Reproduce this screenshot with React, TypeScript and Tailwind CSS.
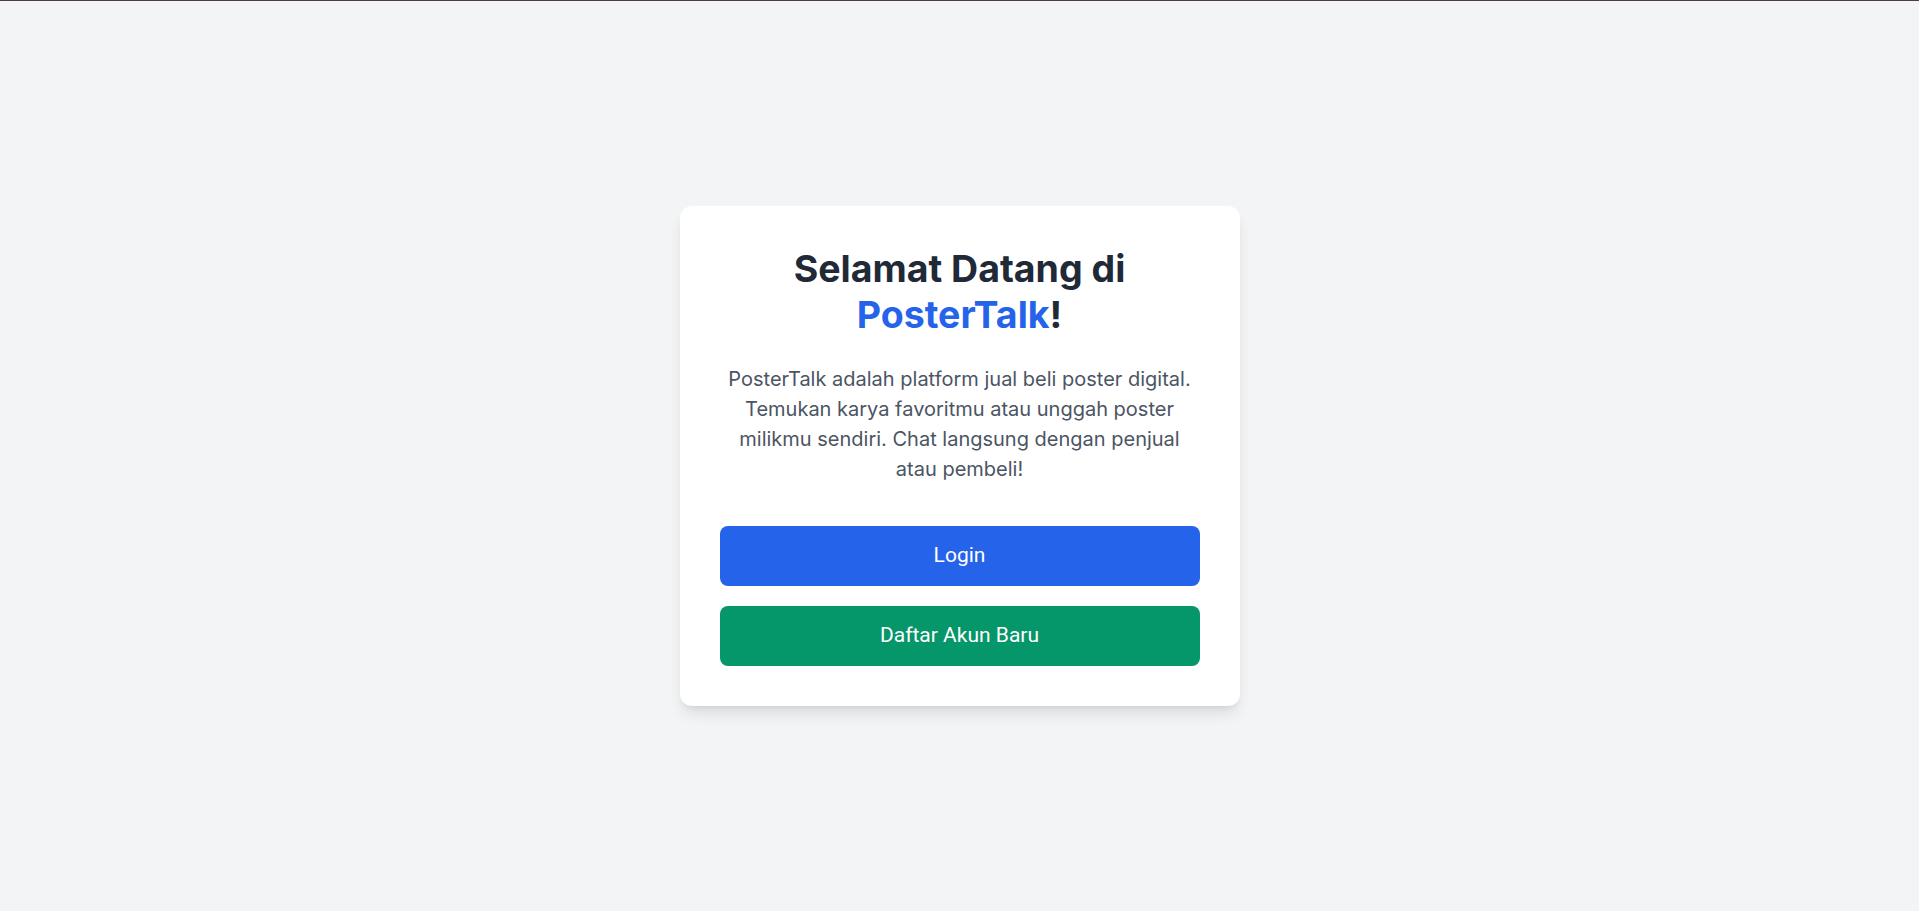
import React from 'react';

const App: React.FC = () => {
  return (
    <div className="min-h-screen flex flex-col bg-[#f3f4f6] border-t border-[#4a3b45]" style={{ fontFamily: 'Inter, "Noto Sans", sans-serif' }}>
      <div className="flex-1 flex items-center justify-center">
        <div className="w-[560px] bg-white rounded-xl shadow-lg p-10 text-center">
          <h1 className="text-[37.5px] font-bold text-[#1f2937] leading-[46px] mb-[26px]">
            Selamat Datang di <span className="text-[#2563eb]">PosterTalk</span>!
          </h1>
          <p className="text-xl text-[#4b5563] leading-[30px] mb-[42px]">
            PosterTalk adalah platform jual beli poster digital. Temukan karya favoritmu atau unggah poster milikmu sendiri. Chat langsung dengan penjual atau pembeli!
          </p>
          <div className="flex flex-col gap-5">
            <button
              className="w-full h-[60px] rounded-lg bg-[#2563eb] text-white text-[21px]"
              style={{ fontFamily: 'Roboto, "Liberation Sans", sans-serif' }}
            >
              Login
            </button>
            <button
              className="w-full h-[60px] rounded-lg bg-[#059669] text-white text-[21px]"
              style={{ fontFamily: 'Roboto, "Liberation Sans", sans-serif' }}
            >
              Daftar Akun Baru
            </button>
          </div>
        </div>
      </div>
    </div>
  );
};

export default App;
